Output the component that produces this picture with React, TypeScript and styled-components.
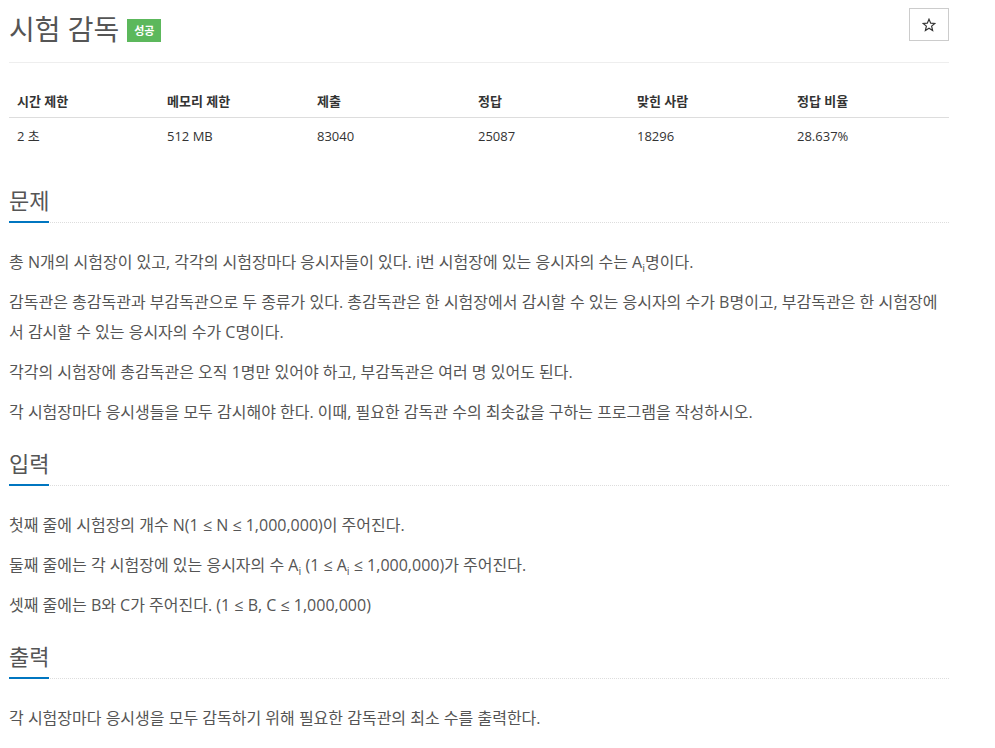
import React from "react";
import styled, { createGlobalStyle } from "styled-components";

const GlobalStyle = createGlobalStyle`
  html, body {
    margin: 0;
    padding: 0;
    background: #fff;
  }
  body {
    font-family: "Open Sans", "Noto Sans CJK KR", sans-serif;
    color: #555;
  }
`;

const Page = styled.div`
  width: 940px;
  padding-left: 9px;
`;

const Header = styled.div`
  display: flex;
  align-items: flex-start;
  justify-content: space-between;
  padding-top: 8px;
  padding-bottom: 13px;
  border-bottom: 1px solid #eee;
`;

const TitleRow = styled.div`
  display: flex;
  align-items: center;
  gap: 8px;
  height: 41px;
`;

const Title = styled.h1`
  margin: 0;
  font-size: 28px;
  font-weight: 400;
  line-height: 40px;
  color: #555;
`;

const Label = styled.span`
  display: inline-flex;
  align-items: center;
  justify-content: center;
  width: 34px;
  height: 23px;
  margin-top: 3px;
  background: #5cb85c;
  color: #fff;
  font-size: 11px;
  font-weight: 700;
`;

const StarButton = styled.button`
  display: flex;
  align-items: center;
  justify-content: center;
  width: 40px;
  height: 33px;
  padding: 0;
  border: 1px solid #ccc;
  border-radius: 0;
  background: #fff;
  color: #333;
  cursor: pointer;
`;

const Grid = styled.div`
  display: grid;
  grid-template-columns: 150px 150px 161px 159px 160px 160px;
`;

const Table = styled.div`
  margin-top: 18px;
`;

const HeadRow = styled(Grid)`
  border-bottom: 1px solid #ddd;
`;

const Th = styled.div`
  padding: 10px 8px 6px;
  font-size: 13px;
  line-height: 20px;
  font-weight: 700;
  color: #333;
`;

const Td = styled.div`
  padding: 8px;
  font-size: 13px;
  line-height: 20px;
  color: #333;
`;

const Section = styled.section<{ $first?: boolean }>`
  margin-top: ${(p) => (p.$first ? "34px" : "24px")};
`;

const Headline = styled.div`
  border-bottom: 1px dotted #ddd;
  display: flex;
`;

const H2 = styled.h2`
  margin: 0 0 -1px;
  padding-bottom: 9px;
  font-size: 22px;
  line-height: 24px;
  font-weight: 400;
  color: #555;
  border-bottom: 2px solid #0076c0;
`;

const Body = styled.div`
  padding-top: 24px;
`;

const P = styled.p`
  margin: 0 0 10px;
  font-size: 16px;
  line-height: 30px;
  color: #555;
`;

const Sub = styled.sub`
  font-size: 11px;
  line-height: 0;
`;

const Ai = () => (
  <>
    A<Sub>i</Sub>
  </>
);

const StarIcon = () => (
  <svg width="14" height="14" viewBox="0 0 24 24" fill="none" stroke="#333" strokeWidth="2" strokeLinejoin="miter">
    <polygon points="12,2 14.9,8.9 22,9.3 16.5,14 18.2,21.5 12,17.4 5.8,21.5 7.5,14 2,9.3 9.1,8.9" />
  </svg>
);

const stats = [
  ["시간 제한", "2 초"],
  ["메모리 제한", "512 MB"],
  ["제출", "83040"],
  ["정답", "25087"],
  ["맞힌 사람", "18296"],
  ["정답 비율", "28.637%"],
];

export default function App() {
  return (
    <>
      <GlobalStyle />
      <Page>
        <Header>
          <TitleRow>
            <Title>시험 감독</Title>
            <Label>성공</Label>
          </TitleRow>
          <StarButton aria-label="즐겨찾기">
            <StarIcon />
          </StarButton>
        </Header>

        <Table>
          <HeadRow>
            {stats.map(([h]) => (
              <Th key={h}>{h}</Th>
            ))}
          </HeadRow>
          <Grid>
            {stats.map(([h, v]) => (
              <Td key={h}>{v}</Td>
            ))}
          </Grid>
        </Table>

        <Section $first>
          <Headline>
            <H2>문제</H2>
          </Headline>
          <Body>
            <P>
              총 N개의 시험장이 있고, 각각의 시험장마다 응시자들이 있다. i번 시험장에 있는 응시자의 수는 <Ai />명이다.
            </P>
            <P>
              감독관은 총감독관과 부감독관으로 두 종류가 있다. 총감독관은 한 시험장에서 감시할 수 있는 응시자의 수가 B명이고, 부감독관은 한 시험장에서 감시할 수 있는 응시자의 수가 C명이다.
            </P>
            <P>각각의 시험장에 총감독관은 오직 1명만 있어야 하고, 부감독관은 여러 명 있어도 된다.</P>
            <P>각 시험장마다 응시생들을 모두 감시해야 한다. 이때, 필요한 감독관 수의 최솟값을 구하는 프로그램을 작성하시오.</P>
          </Body>
        </Section>

        <Section>
          <Headline>
            <H2>입력</H2>
          </Headline>
          <Body>
            <P>첫째 줄에 시험장의 개수 N(1 ≤ N ≤ 1,000,000)이 주어진다.</P>
            <P>
              둘째 줄에는 각 시험장에 있는 응시자의 수 <Ai /> (1 ≤ <Ai /> ≤ 1,000,000)가 주어진다.
            </P>
            <P>셋째 줄에는 B와 C가 주어진다. (1 ≤ B, C ≤ 1,000,000)</P>
          </Body>
        </Section>

        <Section>
          <Headline>
            <H2>출력</H2>
          </Headline>
          <Body>
            <P>각 시험장마다 응시생을 모두 감독하기 위해 필요한 감독관의 최소 수를 출력한다.</P>
          </Body>
        </Section>
      </Page>
    </>
  );
}
